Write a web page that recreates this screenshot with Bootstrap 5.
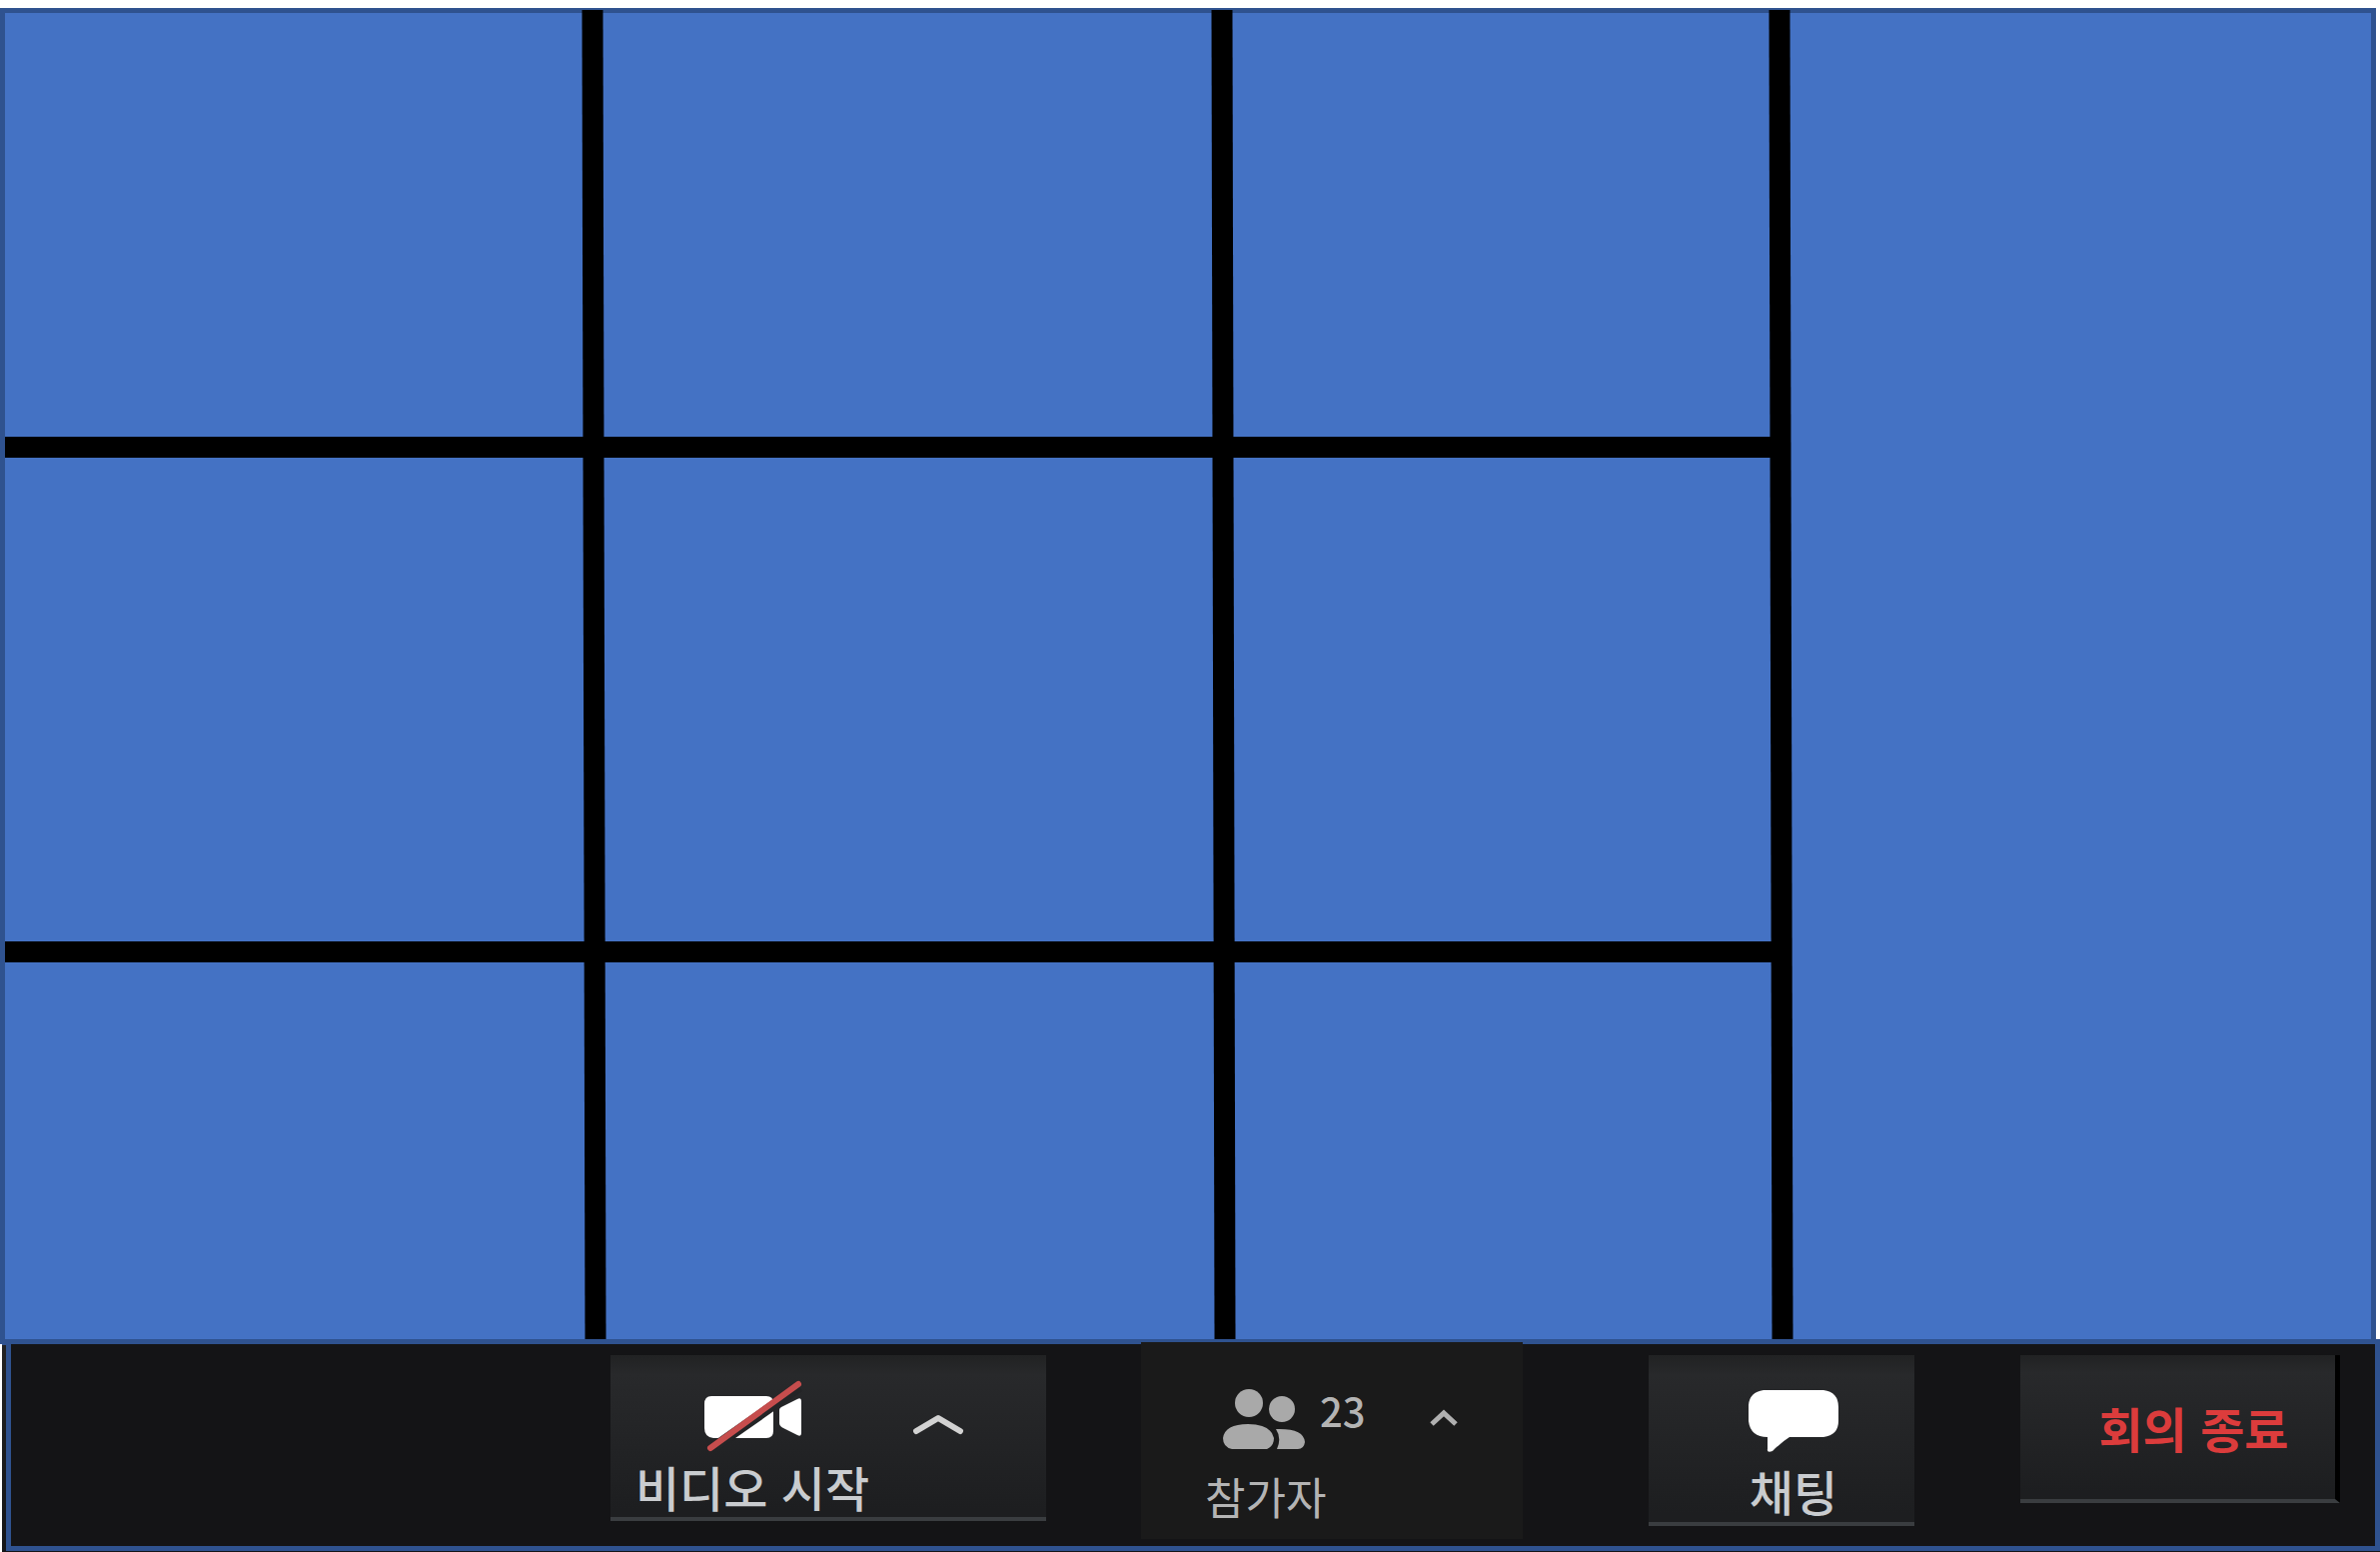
<!DOCTYPE html>
<html lang="ko">
<head>
<meta charset="utf-8">
<meta name="viewport" content="width=device-width, initial-scale=1">
<title>화상 회의</title>
<link href="https://cdn.jsdelivr.net/npm/bootstrap@5.3.0/dist/css/bootstrap.min.css" rel="stylesheet">
<style>
  body { font-family: "Noto Sans CJK KR", sans-serif; background: #fff; }
  .stage { margin: 8px 4px 0 0; border: 5px solid #2f528f; background: #4472c4;
    display: grid; grid-template-columns: 579fr 21px 609fr 21px 537fr 21px 580fr; }
  /* columns reach under the leaning dividers so the horizontal bars join them */
  .tile-col { display: grid; grid-template-rows: 424fr 484fr 377fr; gap: 21px; background: #000; margin: 0 -3px; }
  .tile-col > div { background: #4472c4; }
  .tile-col:first-child > div { margin-left: 3px; }
  .tile-col:first-child { background: linear-gradient(90deg, #2f528f 3px, #000 3px); }
  .divider { background: #000; margin-top: -3px; transform: skewX(0.13deg); }
  .dock { margin: -5px 0 0 2px; padding: 0 0 1px 4px; position: relative;
    background: linear-gradient(#2f528f 6px, transparent 6px), linear-gradient(#222324, #141518);  }
  .toolbar-grid { height: 212px; border: 5px solid #2f528f; background: #141416; display: grid; align-items: start;
    grid-template-columns: 600fr 436px 95fr 382px 126fr 266px 106fr 320px 35fr; }
  .panel { background: linear-gradient(#212223, #28292b 12%, #1d1e20 95%); border-bottom: 4px solid #3a3d40; margin-top: 11px; }
  .panel-video { grid-column: 2; height: 166px; }
  .panel-people { grid-column: 4; height: 197px; margin-top: -2px; background: #1a1a1a; border: 0; }
  .panel-chat { grid-column: 6; height: 171px; }
  .panel-end { grid-column: 8; height: 148px; border-right: 5px solid #000; }
  .tool { background: none; border: 0; color: #c9cccf; padding: 0; font-size: 48px; line-height: 48px; white-space: nowrap;
    display: flex; flex-direction: column; align-items: center; }
  .tool svg, .caret svg { display: block; }
  .caret { background: none; border: 0; padding: 0; }
  .tool-video { width: 284px; padding-top: 24px; gap: 7px; font-weight: 500; }
  .caret-video { margin: 58px 0 0 18px; align-self: flex-start; }
  .tool-people { align-items: flex-start; padding: 46px 0 0 64px; gap: 22px; font-size: 44px; color: #b4b4b4; }
  .people-row { padding-left: 17px; gap: 14px; }
  .people-count { font-size: 40px; line-height: 44px; font-weight: 500; }
  .caret-people { margin: 67px 0 0 64px; align-self: flex-start; }
  .tool-chat { width: 100%; padding: 34px 0 0 24px; gap: 13px; font-weight: 500; }
  .tool-end { width: 100%; height: 100%; padding-left: 32px; justify-content: center; color: #dc3c3c; font-weight: 700; }
</style>
<script src="https://cdn.jsdelivr.net/npm/bootstrap@5.3.0/dist/js/bootstrap.bundle.min.js"></script>
</head>
<body class="d-flex flex-column vh-100 overflow-hidden">
<main class="stage flex-grow-1">
  <div class="tile-col"><div></div><div></div><div></div></div>
  <div class="divider"></div>
  <div class="tile-col"><div></div><div></div><div></div></div>
  <div class="divider"></div>
  <div class="tile-col"><div></div><div></div><div></div></div>
  <div class="divider"></div>
  <div></div>
</main>
<footer class="dock">
  <div class="toolbar-grid">
    <div class="panel panel-video d-flex">
      <button type="button" class="tool tool-video">
        <svg width="104" height="76" viewBox="0 0 104 76" aria-hidden="true">
          <path fill="#fff" d="M11 17h55q7 0 7 7v28q0 7-7 7H13q-9-1-9-10V25q0-8 7-8zM79 31q0-2 2-3l16-8q4-2 4 2v32q0 4-4 2l-14-7q-4-2-4-5z"/>
          <path stroke="#232426" stroke-width="10" d="M15 67L99 8"/>
          <path stroke="#c64d4d" stroke-width="6" stroke-linecap="round" d="M10 69L98 5"/>
        </svg>
        <span>비디오 시작</span>
      </button>
      <button type="button" class="caret caret-video" aria-label="비디오 옵션">
        <svg width="52" height="22" viewBox="0 0 52 22" fill="none" stroke="#d2d2d2" stroke-width="6" stroke-linecap="round" stroke-linejoin="round"><path d="M4 18L26 5L48 18"/></svg>
      </button>
    </div>
    <div class="panel panel-people d-flex">
      <button type="button" class="tool tool-people">
        <span class="people-row d-flex">
          <svg width="84" height="62" viewBox="0 0 84 62" fill="#a9a9a9" aria-hidden="true">
            <circle cx="27" cy="15" r="14"/><circle cx="60" cy="21" r="13"/>
            <path d="M10 61Q1 59 1 50Q3 36 26 36T52 50Q52 58 45 61zM54 41Q82 40 83 54Q82 61 76 61H55Q60 50 54 41z"/>
          </svg>
          <span class="people-count">23</span>
        </span>
        <span>참가자</span>
      </button>
      <button type="button" class="caret caret-people" aria-label="참가자 옵션">
        <svg width="28" height="18" viewBox="0 0 28 18" fill="none" stroke="#b0b0b0" stroke-width="5"><path d="M2 15L14 4L26 15"/></svg>
      </button>
    </div>
    <div class="panel panel-chat">
      <button type="button" class="tool tool-chat">
        <svg width="92" height="64" viewBox="0 0 92 64" fill="#fff" aria-hidden="true"><path d="M16 1H76Q91 3 91 18V32Q91 46 76 48H42Q34 53 25 62Q19 64 20 60V48Q3 48 1 32V16Q2 3 16 1z"/></svg>
        <span>채팅</span>
      </button>
    </div>
    <div class="panel panel-end">
      <button type="button" class="tool tool-end">회의 종료</button>
    </div>
  </div>
</footer>
</body>
</html>
